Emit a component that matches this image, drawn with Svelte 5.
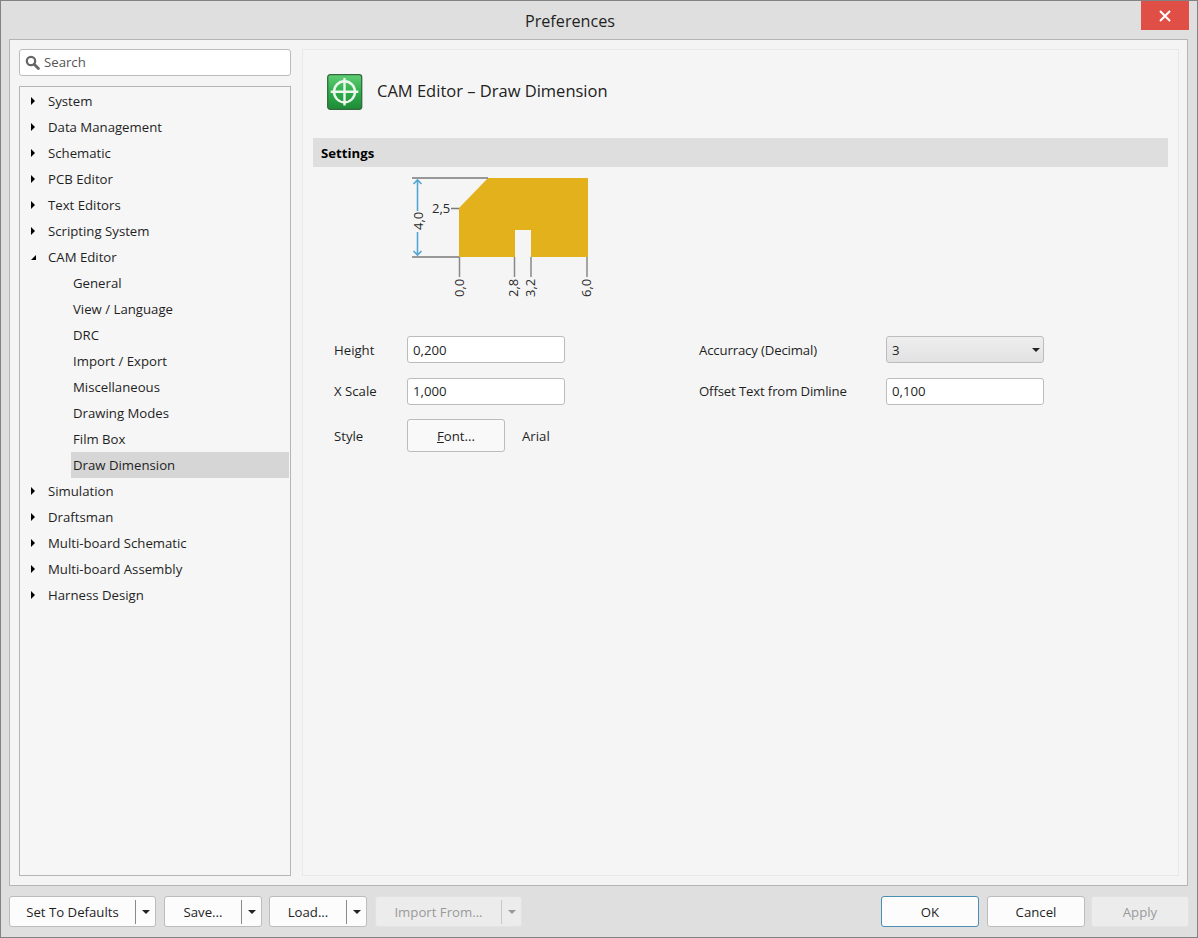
<script>
	const tree = [
		{ label: 'System' },
		{ label: 'Data Management' },
		{ label: 'Schematic' },
		{ label: 'PCB Editor' },
		{ label: 'Text Editors' },
		{ label: 'Scripting System' },
		{
			label: 'CAM Editor',
			open: true,
			children: ['General', 'View / Language', 'DRC', 'Import / Export', 'Miscellaneous', 'Drawing Modes', 'Film Box', 'Draw Dimension']
		},
		{ label: 'Simulation' },
		{ label: 'Draftsman' },
		{ label: 'Multi-board Schematic' },
		{ label: 'Multi-board Assembly' },
		{ label: 'Harness Design' }
	];
	const selected = 'Draw Dimension';
	const ticks = [
		{ x: 459.5, label: '0,0', tx: 464 },
		{ x: 514.5, label: '2,8', tx: 518 },
		{ x: 531, label: '3,2', tx: 535 },
		{ x: 587, label: '6,0', tx: 591 }
	];
</script>

<div class="window">
	<header class="titlebar">
		<span class="title">Preferences</span>
		<button type="button" class="close" aria-label="Close">
			<svg width="12" height="12" viewBox="0 0 12 12">
				<path d="M1 1l10 10M11 1L1 11" stroke="#fff" stroke-width="2" fill="none" />
			</svg>
		</button>
	</header>

	<main class="body">
		<aside class="sidebar">
			<div class="search">
				<svg width="15" height="15" viewBox="0 0 15 15">
					<circle cx="6" cy="6" r="4.2" fill="none" stroke="#666" stroke-width="2.2" />
					<path d="M9.2 9.2l4.2 4.2" stroke="#666" stroke-width="2.8" stroke-linecap="round" />
				</svg>
				<span class="search-text">Search</span>
			</div>
			<nav class="tree">
				{#each tree as item}
					<div class="row">
						<span class="arrow" class:open={item.open}></span>
						<span>{item.label}</span>
					</div>
					{#if item.children}
						{#each item.children as child}
							<div class="row child" class:selected={child === selected}>{child}</div>
						{/each}
					{/if}
				{/each}
			</nav>
		</aside>

		<section class="content">
			<div class="page-head">
				<svg width="36" height="36" viewBox="0 0 36 36">
					<defs>
						<linearGradient id="green" x1="0" y1="0" x2="0" y2="1">
							<stop offset="0" stop-color="#5fce74" />
							<stop offset="0.5" stop-color="#2fae4c" />
							<stop offset="1" stop-color="#1d8a36" />
						</linearGradient>
					</defs>
					<rect x="0.7" y="0.7" width="34" height="34.6" rx="2.5" fill="url(#green)" stroke="#34693f" stroke-width="1.3" />
					<circle cx="17.5" cy="17.8" r="10.5" fill="none" stroke="#eef7ee" stroke-width="2.4" />
					<path d="M17.5 4v27.5M3.7 17.8h27.6" stroke="#eef7ee" stroke-width="2.4" />
				</svg>
				<h1>CAM Editor – Draw Dimension</h1>
			</div>

			<h2 class="section">Settings</h2>

			<svg class="diagram" width="300" height="135" viewBox="400 167 300 135">
				<path d="M459 208L488 178H588V257H531V230H515V257H459Z" fill="#e3b11b" />
				<path d="M412 178H488M412 257H459M451 208.5H459" stroke="#7a7a7a" stroke-width="1.4" fill="none" />
				{#each ticks as t}
					<path d="M{t.x} 257V277" stroke="#888" stroke-width="1.5" fill="none" />
					<text class="dim" transform="translate({t.tx} 297) rotate(-90)">{t.label}</text>
				{/each}
				<path
					d="M417.5 180V211M417.5 232V255M413.5 184L417.5 180L421.5 184M413.5 251L417.5 255L421.5 251"
					stroke="#52a6d0"
					stroke-width="1.6"
					fill="none"
				/>
				<text class="dim" transform="translate(422.5 230) rotate(-90)">4,0</text>
				<text class="dim" x="432" y="213">2,5</text>
			</svg>

			<div class="form">
				<div class="col left">
					<span>Height</span>
					<div class="input">0,200</div>
					<span class="up">X Scale</span>
					<div class="input up-text">1,000</div>
					<span class="style-label">Style</span>
					<div class="font-row">
						<button type="button" class="font-btn"><u>F</u>ont...</button>
						<span>Arial</span>
					</div>
				</div>
				<div class="col right">
					<span class="tight">Accurracy (Decimal)</span>
					<div class="select">
						<span>3</span>
						<span class="caret"></span>
					</div>
					<span class="tight up">Offset Text from Dimline</span>
					<div class="input up-text">0,100</div>
				</div>
			</div>
		</section>
	</main>

	<footer class="footer">
		<div class="group">
			<div class="split w1">
				<span class="split-label">Set To Defaults</span>
				<span class="split-arrow"><span class="caret"></span></span>
			</div>
			<div class="split w2">
				<span class="split-label">Save...</span>
				<span class="split-arrow"><span class="caret"></span></span>
			</div>
			<div class="split w2 load">
				<span class="split-label">Load...</span>
				<span class="split-arrow"><span class="caret"></span></span>
			</div>
			<div class="split w3 disabled">
				<span class="split-label">Import From...</span>
				<span class="split-arrow"><span class="caret"></span></span>
			</div>
		</div>
		<div class="group">
			<button type="button" class="btn primary">OK</button>
			<button type="button" class="btn">Cancel</button>
			<button type="button" class="btn disabled apply">Apply</button>
		</div>
	</footer>
</div>

<style>
	:global(body) {
		margin: 0;
		background: #dfdfdf;
	}

	.window {
		box-sizing: border-box;
		width: 1198px;
		height: 938px;
		display: flex;
		flex-direction: column;
		background: #dfdfdf;
		border: 1px solid #828282;
		font-family: 'Open Sans', 'Noto Sans', sans-serif;
		font-size: 13.2px;
		color: #1f1f1f;
	}

	.titlebar {
		position: relative;
		height: 38px;
		flex: none;
		display: flex;
		align-items: center;
		justify-content: center;
	}

	.title {
		font-size: 16.2px;
		margin-left: -58px;
		margin-top: 1px;
	}

	.close {
		position: absolute;
		top: 0;
		right: 8px;
		width: 48px;
		height: 29px;
		padding: 0;
		border: 0;
		background: #e04f45;
		display: flex;
		align-items: center;
		justify-content: center;
	}

	.body {
		flex: none;
		box-sizing: border-box;
		height: 847px;
		margin: 0 9px 0 8px;
		padding: 9px 8px 9px 9px;
		display: flex;
		gap: 11px;
		background: #f4f4f4;
		border: 1px solid #b5b5b5;
	}

	.sidebar {
		width: 272px;
		flex: none;
		display: flex;
		flex-direction: column;
		gap: 10px;
	}

	.search {
		box-sizing: border-box;
		height: 27px;
		flex: none;
		display: flex;
		align-items: center;
		gap: 4px;
		padding-left: 5px;
		background: #fff;
		border: 1px solid #bcbcbc;
		border-radius: 3px;
		color: #555;
	}

	.search-text {
		margin-top: -2px;
	}

	.tree {
		flex: 1;
		box-sizing: border-box;
		padding: 1px;
		background: #f6f6f6;
		border: 1px solid #b5b5b5;
	}

	.row {
		height: 26px;
		display: flex;
		align-items: center;
		padding-left: 27px;
		white-space: nowrap;
	}

	.row.child {
		padding-left: 52px;
	}

	.row.selected {
		background: #d6d6d6;
		margin-left: 50px;
		padding-left: 2px;
	}

	.arrow {
		width: 0;
		height: 0;
		margin-left: -17px;
		margin-right: 13px;
		border-left: 4px solid #000;
		border-top: 4px solid transparent;
		border-bottom: 4px solid transparent;
	}

	.arrow.open {
		border: 0;
		border-right: 5px solid #000;
		border-top: 5px solid transparent;
		margin-right: 12px;
		margin-left: -17px;
	}

	.content {
		flex: 1;
		box-sizing: border-box;
		padding: 24px 10px 0;
		background: #f5f5f5;
		border: 1px solid #e8e8e8;
		min-width: 0;
	}

	.page-head {
		height: 36px;
		display: flex;
		align-items: center;
		gap: 14px;
		padding-left: 14px;
	}

	.page-head h1 {
		margin: -4px 0 0;
		font-size: 16.5px;
		font-weight: 400;
		color: #222;
	}

	.section {
		box-sizing: border-box;
		height: 29px;
		margin: 28px 0 0;
		padding-left: 8px;
		display: flex;
		align-items: center;
		background: #dedede;
		font-size: 13.2px;
		font-weight: 700;
		color: #000;
	}

	.diagram {
		display: block;
		margin-left: 87px;
	}

	.dim {
		font-size: 13px;
		fill: #2a2a2a;
	}

	.form {
		display: flex;
		margin-top: 34px;
		padding-left: 21px;
	}

	.col {
		display: grid;
		align-items: center;
		row-gap: 15px;
		line-height: 18px;
	}

	.col.left {
		grid-template-columns: 73px 158px;
		grid-template-rows: 27px 27px 33px;
		width: 365px;
	}

	.col.right {
		grid-template-columns: 187px 158px;
		grid-template-rows: 27px 27px;
	}

	.tight {
		letter-spacing: -0.15px;
	}

	.up {
		margin-top: -2px;
	}

	.up-text {
		padding-bottom: 2px;
	}

	.style-label {
		margin-top: -1px;
	}

	.input,
	.select {
		box-sizing: border-box;
		height: 27px;
		display: flex;
		align-items: center;
		padding-left: 5px;
		background: #fff;
		border: 1px solid #bcbcbc;
		border-radius: 3px;
	}

	.select {
		justify-content: space-between;
		padding-right: 3px;
		background: linear-gradient(#eeeeee, #e2e2e2);
	}

	.caret {
		width: 0;
		height: 0;
		border-top: 4px solid #222;
		border-left: 4px solid transparent;
		border-right: 4px solid transparent;
	}

	.font-row {
		display: flex;
		align-items: center;
		gap: 17px;
		white-space: nowrap;
		margin-top: -2px;
	}

	.font-btn {
		box-sizing: border-box;
		width: 98px;
		height: 33px;
		background: #f9f9f9;
		border: 1px solid #bcbcbc;
		border-radius: 3px;
		font: inherit;
		color: inherit;
		padding: 0;
	}

	.footer {
		display: flex;
		justify-content: space-between;
		padding: 10px 8px 0;
	}

	.group {
		display: flex;
		gap: 8px;
	}

	.split,
	.btn {
		box-sizing: border-box;
		height: 31px;
		background: #fcfcfc;
		border: 1px solid #bcbcbc;
		border-radius: 3px;
		font: inherit;
		color: inherit;
		padding: 0;
	}

	.split {
		display: flex;
		align-items: center;
	}

	.w1 {
		width: 147px;
	}

	.w2 {
		width: 98px;
	}

	.w3 {
		width: 147px;
	}

	.load {
		margin-left: -1px;
	}

	.split-label {
		flex: 1;
		text-align: center;
		white-space: nowrap;
	}

	.split-arrow {
		width: 19px;
		height: 24px;
		display: flex;
		align-items: center;
		justify-content: center;
		border-left: 1px solid #8a8a8a;
	}

	.btn {
		width: 98px;
	}

	.btn.primary {
		border-color: #4b8fb5;
	}

	.apply {
		margin-left: -2px;
	}

	.disabled {
		background: #ececec;
		border-color: #e2e2e2;
		color: #9a9a9a;
	}

	.disabled .split-arrow {
		border-left-color: #c8c8c8;
	}

	.disabled .caret {
		border-top-color: #999;
	}
</style>
